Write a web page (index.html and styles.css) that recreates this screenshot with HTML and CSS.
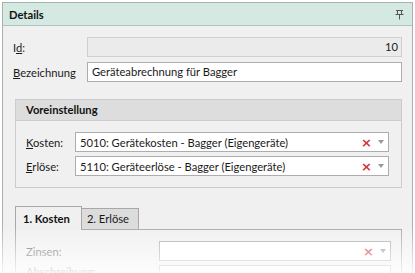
FILE: index.html
```html
<!DOCTYPE html>
<html>
<head>
<meta charset="utf-8">
<link rel="stylesheet" href="styles.css">
</head>
<body>
<div class="panel">
  <div class="header">
    <span class="title">Details</span>
    <svg class="pin" width="9" height="11" viewBox="0 0 9 11"><path d="M1 1.5h7M2.5 1.5v4M6.5 1.5v4M0.5 5.5h8M4.5 5.5v5" stroke="#555" stroke-width="1" fill="none"/></svg>
  </div>
  <div class="content">
    <div class="form">
      <label class="lbl">I<u>d</u>:</label>
      <div class="field ro">10</div>
      <label class="lbl"><u>B</u>ezeichnung</label>
      <div class="field">Geräteabrechnung für Bagger</div>
    </div>
    <div class="group">
      <div class="group-head">Voreinstellung</div>
      <div class="group-body">
        <label class="lbl"><u>K</u>osten:</label>
        <div class="combo"><span class="ctext">5010: Gerätekosten - Bagger (Eigengeräte)</span><span class="clr">×</span><span class="arr"></span></div>
        <label class="lbl"><u>E</u>rlöse:</label>
        <div class="combo"><span class="ctext">5110: Geräteerlöse - Bagger (Eigengeräte)</span><span class="clr">×</span><span class="arr"></span></div>
      </div>
    </div>
    <div class="tabs">
      <div class="tab active">1. Kosten</div>
      <div class="tab">2. Erlöse</div>
    </div>
    <div class="tabpage">
      <label class="lbl dim">Zinsen:</label>
      <div class="combo"><span class="ctext"></span><span class="clr">×</span><span class="arr"></span></div>
      <label class="lbl dim low">Abschreibung:</label>
      <div class="combo"><span class="ctext"></span></div>
    </div>
  </div>
  <div class="fade"></div>
</div>
</body>
</html>
```
FILE: styles.css
```css
html, body {
  margin: 0;
  padding: 0;
  background: #ffffff;
  overflow: hidden;
  height: 273px;
}
body {
  font-family: "Lato", "Open Sans", sans-serif;
  font-size: 11.2px;
  color: #1a1a1a;
}
.panel {
  position: relative;
  margin: 2px 0 0 2px;
  width: 409px;
  height: 290px;
  border: 1px solid #a7b2ae;
  background: #f0f0f0;
}
.header {
  height: 22px;
  background: #d3e9e1;
  border-bottom: 1px solid #b3c4be;
  display: flex;
  align-items: center;
  justify-content: space-between;
  padding: 0 8px 0 6px;
}
.title {
  font-weight: bold;
  color: #111;
}
.pin { display: block; }
.content {
  padding: 11px 10px 0 10px;
}
.form {
  display: grid;
  grid-template-columns: 74px 1fr;
  row-gap: 5px;
  align-items: center;
}
.lbl {
  color: #1a1a1a;
}
.lbl u { text-decoration: underline; text-underline-offset: 1px; }
.field {
  height: 18px;
  line-height: 18px;
  border: 1px solid #adadad;
  background: #fff;
  padding: 0 4px;
  white-space: nowrap;
}
.field.ro {
  background: #ebebeb;
  border-color: #cfcfcf;
  text-align: right;
  padding-right: 3px;
}
.group {
  margin: 17px 0 0 2px;
  border: 1px solid #cccccc;
}
.group-head {
  height: 20px;
  line-height: 20px;
  background: #dddddd;
  border-bottom: 1px solid #cccccc;
  padding-left: 10px;
  font-weight: bold;
  color: #111;
}
.group-body {
  display: grid;
  grid-template-columns: 49px 1fr;
  row-gap: 4px;
  align-items: center;
  padding: 11px 12px 11px 10px;
}
.combo {
  height: 18px;
  border: 1px solid #adadad;
  background: #fff;
  display: flex;
  align-items: center;
  padding-left: 4px;
}
.ctext { flex: 1; white-space: nowrap; overflow: hidden; }
.clr {
  color: #d2323c;
  font-family: "DejaVu Sans", sans-serif;
  font-size: 13px;
  line-height: 1;
  width: 10px;
  margin-right: 7px;
  font-weight: bold;
}
.arr {
  width: 0;
  height: 0;
  border-left: 3.5px solid transparent;
  border-right: 3.5px solid transparent;
  border-top: 4px solid #999;
  margin-right: 4px;
}
.tabs {
  display: flex;
  align-items: flex-end;
  margin: 18px 0 0 2px;
  height: 23px;
}
.tab {
  box-sizing: border-box;
  height: 21px;
  line-height: 19px;
  padding: 0 9px 0 5px;
  border: 1px solid #a8a8a8;
  border-bottom: none;
  background: #dcdcdc;
}
.tab.active {
  height: 24px;
  line-height: 24px;
  font-weight: bold;
  color: #111;
  background: #f0f0f0;
  padding: 0 11px 0 7px;
  margin-bottom: -1px;
  position: relative;
  z-index: 1;
}
.tab + .tab { border-left: none; }
.tabpage {
  margin-left: 2px;
  margin-right: 0;
  border: 1px solid #a8a8a8;
  display: grid;
  grid-template-columns: 133px 1fr;
  row-gap: 4px;
  align-items: center;
  padding: 11px 10px 11px 10px;
}
.lbl.dim { color: #666; }
.lbl.low { line-height: 10px; height: 10px; overflow: hidden; align-self: start; padding-top: 2px; }
.fade {
  position: absolute;
  left: -3px;
  right: -3px;
  top: 222px;
  height: 52px;
  background: linear-gradient(rgba(255,255,255,0), rgba(255,255,255,0.93));
  pointer-events: none;
}
```
